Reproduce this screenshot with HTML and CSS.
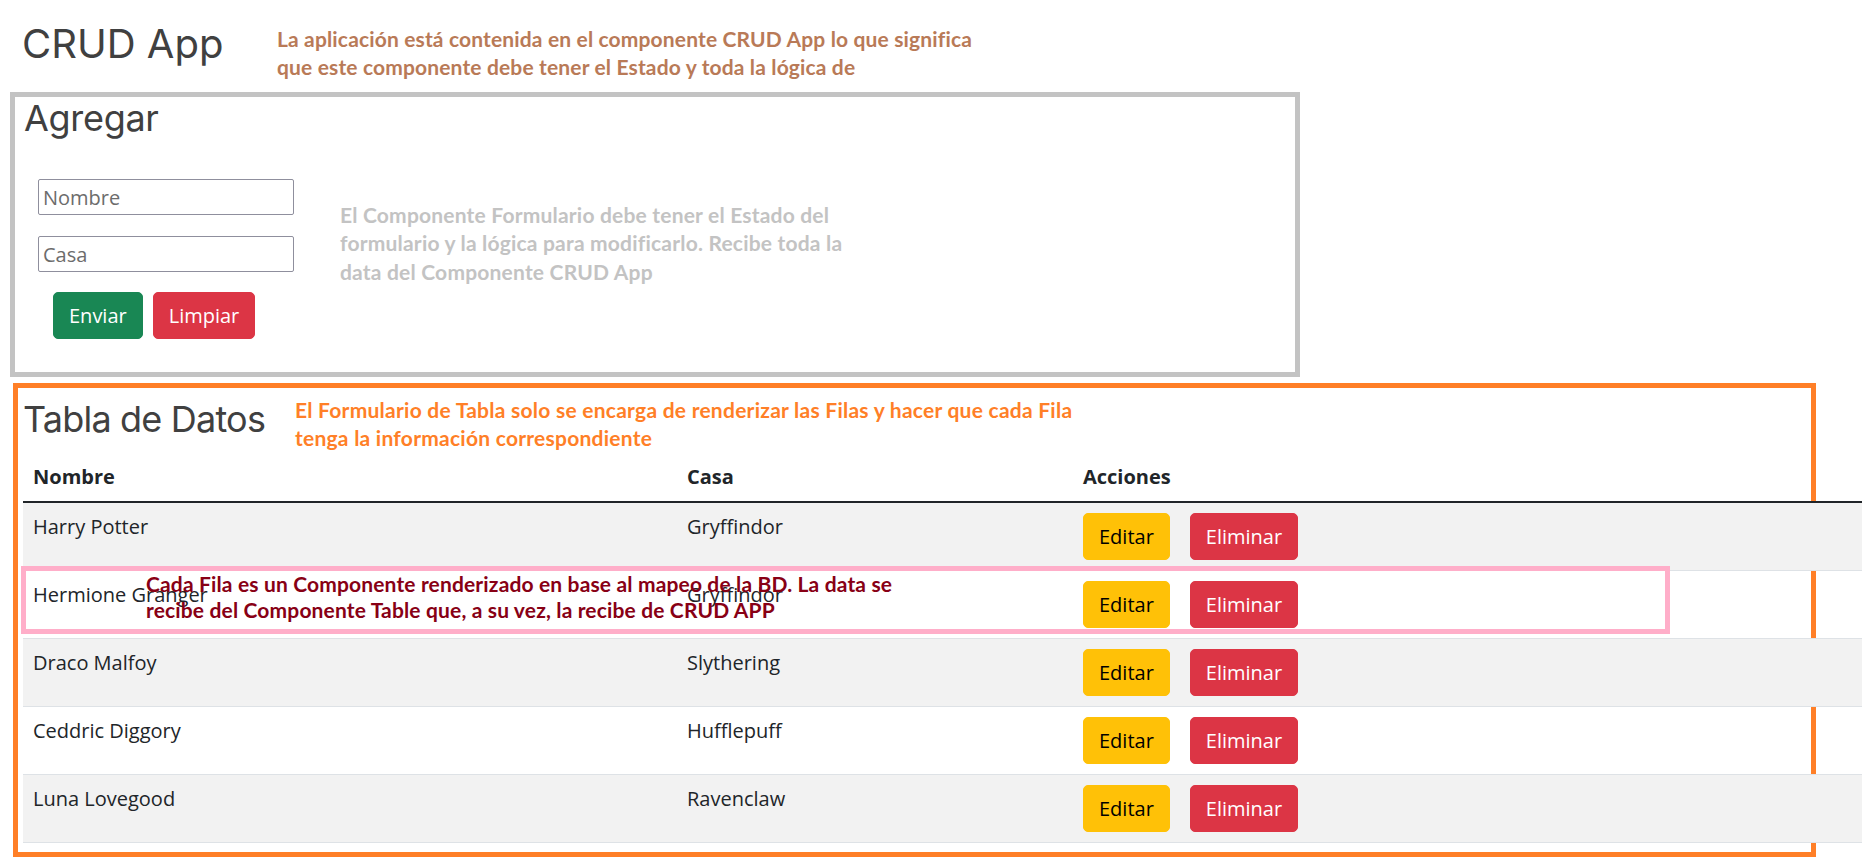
FILE: index.html
```html
<!DOCTYPE html>
<html lang="es">
<head>
<meta charset="utf-8">
<title>CRUD App</title>
<link rel="stylesheet" href="styles.css">
</head>
<body>
<div class="page">
  <header class="app-header">
    <h1 class="app-title">CRUD App</h1>
    <p class="note note-brown">La aplicación está contenida en el componente CRUD App lo que significa<br>que este componente debe tener el Estado y toda la lógica de</p>
  </header>

  <section class="box box-form">
    <h2 class="section-title">Agregar</h2>
    <div class="form-row">
      <form class="crud-form">
        <input class="field" type="text" placeholder="Nombre">
        <input class="field field-second" type="text" placeholder="Casa">
        <div class="form-actions">
          <button type="button" class="btn btn-success">Enviar</button>
          <button type="button" class="btn btn-danger">Limpiar</button>
        </div>
      </form>
      <p class="note note-gray">El Componente Formulario debe tener el Estado del<br>formulario y la lógica para modificarlo. Recibe toda la<br>data del Componente CRUD App</p>
    </div>
  </section>

  <section class="box box-table">
    <div class="table-head">
      <h2 class="section-title table-title">Tabla de Datos</h2>
      <p class="note note-orange">El Formulario de Tabla solo se encarga de renderizar las Filas y hacer que cada Fila<br>tenga la información correspondiente</p>
    </div>
    <table class="data-table">
      <thead>
        <tr>
          <th class="col-name">Nombre</th>
          <th class="col-house">Casa</th>
          <th class="col-actions">Acciones</th>
        </tr>
      </thead>
      <tbody>
        <tr>
          <td>Harry Potter</td>
          <td>Gryffindor</td>
          <td><div class="actions"><button type="button" class="btn btn-warning">Editar</button><button type="button" class="btn btn-danger">Eliminar</button></div></td>
        </tr>
        <tr>
          <td>Hermione Granger</td>
          <td>Gryffindor</td>
          <td><div class="actions"><button type="button" class="btn btn-warning">Editar</button><button type="button" class="btn btn-danger">Eliminar</button></div></td>
        </tr>
        <tr>
          <td>Draco Malfoy</td>
          <td>Slythering</td>
          <td><div class="actions"><button type="button" class="btn btn-warning">Editar</button><button type="button" class="btn btn-danger">Eliminar</button></div></td>
        </tr>
        <tr>
          <td>Ceddric Diggory</td>
          <td>Hufflepuff</td>
          <td><div class="actions"><button type="button" class="btn btn-warning">Editar</button><button type="button" class="btn btn-danger">Eliminar</button></div></td>
        </tr>
        <tr>
          <td>Luna Lovegood</td>
          <td>Ravenclaw</td>
          <td><div class="actions"><button type="button" class="btn btn-warning">Editar</button><button type="button" class="btn btn-danger">Eliminar</button></div></td>
        </tr>
      </tbody>
    </table>
  </section>

  <div class="row-callout"></div>
  <p class="note note-red">Cada Fila es un Componente renderizado en base al mapeo de la BD. La data se<br>recibe del Componente Table que, a su vez, la recibe de CRUD APP</p>
</div>
</body>
</html>
```

FILE: styles.css
```css
* {
  box-sizing: border-box;
}

body {
  margin: 0;
  background: #ffffff;
  color: #212529;
  font-family: "Open Sans", "Noto Sans", sans-serif;
  font-size: 20px;
}

.page {
  position: relative;
  width: 1876px;
  height: 858px;
  overflow: hidden;
}

/* ---------- header ---------- */
.app-header {
  display: flex;
  align-items: flex-start;
  height: 92px;
}

.app-title {
  flex: 0 0 255px;
  margin: 19.5px 0 0 22px;
  font-family: "Inter", "Lato", sans-serif;
  font-weight: 400;
  font-size: 40px;
  line-height: 48px;
  color: #404040;
}

/* ---------- annotations ---------- */
.note {
  margin: 0;
  font-family: "Lato", "Noto Sans", sans-serif;
  font-weight: 700;
  font-size: 21px;
  letter-spacing: 0.15px;
  line-height: 28px;
  white-space: nowrap;
}

.note-brown {
  margin-top: 24.5px;
  color: #b97a57;
}

.note-gray {
  margin: 21.5px 0 0 46px;
  line-height: 28.5px;
  letter-spacing: 0.2px;
  color: #c3c3c3;
}

.note-orange {
  margin-top: 8px;
  letter-spacing: 0.25px;
  color: #ff7f27;
}

.note-red {
  position: absolute;
  left: 146px;
  top: 571px;
  line-height: 26px;
  color: #880015;
}

/* ---------- boxes ---------- */
.box {
  border-style: solid;
  border-width: 5px;
}

.box-form {
  width: 1290px;
  height: 285px;
  margin-left: 10px;
  padding-left: 9px;
  border-color: #c3c3c3;
}

.section-title {
  margin: 0;
  font-family: "Inter", "Lato", sans-serif;
  font-weight: 400;
  font-size: 36px;
  line-height: 43px;
  letter-spacing: -0.3px;
  color: #404040;
}

.form-row {
  display: flex;
  align-items: flex-start;
  margin-top: 39px;
}

.crud-form {
  display: flex;
  flex-direction: column;
  width: 256px;
  margin: 0 0 0 14px;
}

.field {
  width: 256px;
  height: 36px;
  padding: 0 4px;
  border: 1px solid #8f8f9d;
  border-radius: 2px;
  font-family: "Open Sans", sans-serif;
  font-size: 20px;
  color: #212529;
  background: #ffffff;
}

.field::placeholder {
  color: #6c6c6c;
}

.field-second {
  margin-top: 21px;
}

.form-actions {
  display: flex;
  gap: 10px;
  margin-top: 20px;
  padding-left: 15px;
}

/* ---------- buttons ---------- */
.btn {
  height: 47px;
  padding: 8px 15px;
  border: 1px solid transparent;
  border-radius: 5px;
  font-family: "Open Sans", sans-serif;
  font-size: 20px;
  line-height: 29px;
  cursor: pointer;
}

.btn-success {
  background: #198754;
  border-color: #198754;
  color: #ffffff;
}

.btn-danger {
  background: #dc3545;
  border-color: #dc3545;
  color: #ffffff;
}

.btn-warning {
  background: #ffc107;
  border-color: #ffc107;
  color: #000000;
}

/* ---------- table box ---------- */
.box-table {
  width: 1803px;
  height: 474px;
  margin: 6px 0 0 13px;
  padding-left: 5px;
  border-color: #ff7f27;
}

.table-head {
  display: flex;
  align-items: flex-start;
  height: 64.5px;
}

.table-title {
  flex: 0 0 272px;
  margin: 10px 0 0 0;
  letter-spacing: -0.8px;
}

.data-table {
  width: 1839px;
  border-collapse: collapse;
  table-layout: fixed;
}

.col-name {
  width: 654px;
}

.col-house {
  width: 396px;
}

.data-table th,
.data-table td {
  padding: 10px;
  text-align: left;
  vertical-align: top;
  line-height: 28.5px;
  border-bottom: 1px solid #dee2e6;
}

.data-table th {
  font-weight: 700;
  border-bottom: 2px solid #212529;
}

.data-table tbody tr:nth-child(odd) td {
  background: #f2f2f2;
}

.actions {
  display: flex;
  gap: 20px;
}

/* ---------- row callout ---------- */
.row-callout {
  position: absolute;
  left: 21px;
  top: 566px;
  width: 1649px;
  height: 68px;
  border: 5px solid #ffaec9;
}
```
